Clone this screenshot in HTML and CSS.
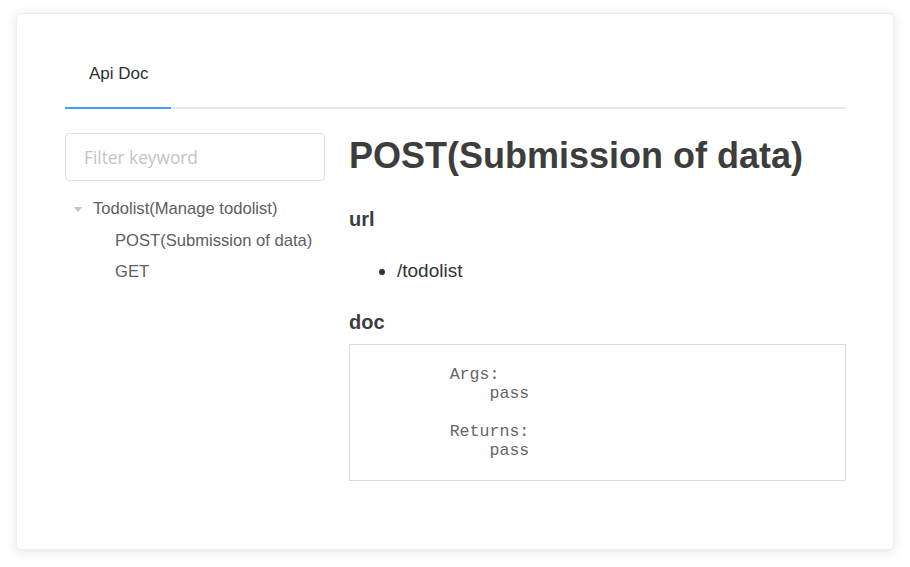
FILE: index.html
```html
<!DOCTYPE html>
<html>
<head>
<meta charset="utf-8">
<link rel="stylesheet" href="styles.css">
</head>
<body>
<div class="card">
  <div class="tabs">
    <div class="tab active">Api Doc</div>
  </div>
  <div class="layout">
    <aside class="aside">
      <input class="filter" type="text" placeholder="Filter keyword">
      <div class="tree">
        <div class="node">
          <span class="caret"></span>
          <span class="label">Todolist(Manage todolist)</span>
        </div>
        <div class="node child"><span class="label">POST(Submission of data)</span></div>
        <div class="node child"><span class="label">GET</span></div>
      </div>
    </aside>
    <main class="doc">
      <h1>POST(Submission of data)</h1>
      <h3 class="h-url">url</h3>
      <ul>
        <li>/todolist</li>
      </ul>
      <h3 class="h-doc">doc</h3>
      <pre>
        Args:
            pass

        Returns:
            pass</pre>
    </main>
  </div>
</div>
</body>
</html>
```

FILE: styles.css
```css
html, body {
  margin: 0;
  padding: 0;
  background: #fff;
}
body {
  padding: 13px 16px 18px;
  font-family: "Liberation Sans", Arial, sans-serif;
}
.card {
  border: 1px solid #ebeef5;
  border-radius: 4px;
  box-shadow: 0 2px 12px rgba(0, 0, 0, 0.1);
  background: #fff;
  padding: 26px 47px 68px 48px;
}
.tabs {
  display: flex;
  border-bottom: 2px solid #e4e7ed;
}
.tab {
  height: 67px;
  line-height: 67px;
  padding: 0 22px 0 24px;
  font-size: 17px;
  color: #303133;
  margin-bottom: -2px;
}
.tab.active {
  border-bottom: 2px solid #409eff;
}
.layout {
  display: flex;
  gap: 24px;
  margin-top: 24px;
}
.aside {
  width: 260px;
  flex: none;
}
.filter {
  box-sizing: border-box;
  width: 100%;
  height: 48px;
  border: 1px solid #dcdfe6;
  border-radius: 4px;
  padding: 1px 18px 0;
  font-family: "Open Sans", sans-serif;
  font-size: 17.3px;
  color: #606266;
  outline: none;
}
.filter::placeholder {
  color: #c0c4cc;
}
.tree {
  margin-top: 12px;
}
.node {
  display: flex;
  align-items: center;
  height: 32px;
  font-size: 16.6px;
  color: #5c5e63;
  padding-left: 9px;
}
.node:nth-child(2) {
  height: 31px;
}
.node.child {
  padding-left: 50px;
}
.caret {
  width: 0;
  height: 0;
  border-left: 4px solid transparent;
  border-right: 4px solid transparent;
  border-top: 5px solid #c0c4cc;
  margin-right: 11px;
}
.doc {
  flex: 1;
  min-width: 0;
  color: #3d3d3d;
}
.doc h1 {
  margin: 2px 0 0;
  font-size: 36px;
  line-height: 42px;
  font-weight: bold;
}
.doc h3 {
  font-size: 20px;
  font-weight: bold;
  margin: 0;
  line-height: 24px;
}
.doc .h-url {
  margin-top: 30px;
}
.doc .h-doc {
  margin-top: 27px;
}
.doc ul {
  margin: 28px 0 0;
  padding-left: 48px;
  font-size: 19px;
  line-height: 24px;
  color: #333;
}
.doc pre {
  margin: 10px 0 0;
  border: 1px solid #ddd;
  padding: 20px 20px;
  font-family: "Liberation Mono", monospace;
  font-size: 16.6px;
  line-height: 19px;
  color: #666;
}
```
